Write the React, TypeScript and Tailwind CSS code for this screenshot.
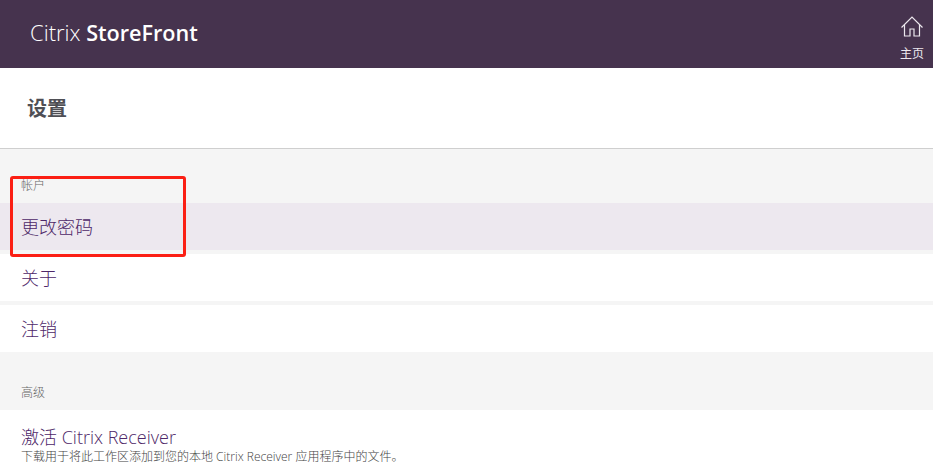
const App = () => {
  return (
    <div className="relative h-[464px] w-[933px] overflow-hidden bg-[#f5f5f5] font-['Open_Sans','Noto_Sans_CJK_SC',sans-serif]">
      {/* header */}
      <header className="flex h-[68px] items-center justify-between bg-[#46334e] pl-[30px] pr-[9px] text-white">
        <div className="mt-[-4px] text-[22px] leading-[30px]">
          <span className="font-light">Citrix</span> <span className="text-[21.6px] font-semibold">StoreFront</span>
        </div>
        <div className="flex flex-col items-center pt-[8px]">
          <svg width="24" height="24" viewBox="0 0 24 24" fill="none" stroke="#ece8ee" strokeWidth="1.2">
            <path d="M1.5 12.5 12 2l10.5 10.5" />
            <path d="M4.5 10v11h5.5v-7h4v7h5.5V10" />
          </svg>
          <span className="mt-[7px] text-[12px] leading-[16px] text-[#ece8ee]">主页</span>
        </div>
      </header>

      {/* page title */}
      <div className="flex h-[81px] items-center border-b border-[#cfcfcf] bg-white pl-[27px] pt-[1px]">
        <h1 className="text-[20px] font-bold text-[#4f4f55]">设置</h1>
      </div>

      {/* account */}
      <div className="h-[54px] pl-[21px] pt-[29px] text-[12px] font-light leading-[16px] text-[#666666]">帐户</div>
      <div className="flex flex-col gap-[4px] text-[18px] font-light text-[#4e2768]">
        <div className="flex h-[47px] items-center bg-[#ede8ef] pl-[21px] pt-[2px]">更改密码</div>
        <div className="flex h-[47px] items-center bg-white pl-[21px] pt-[2px]">关于</div>
        <div className="flex h-[47px] items-center bg-white pl-[21px] pt-[2px]">注销</div>
      </div>

      {/* advanced */}
      <div className="h-[58px] pl-[21px] pt-[33px] text-[12px] font-light leading-[16px] text-[#666666]">高级</div>
      <div className="h-[54px] bg-white pl-[21px] pt-[15px] font-light">
        <div className="text-[18px] leading-[24px] text-[#4e2768]">激活 Citrix Receiver</div>
        <div className="mt-[1px] text-[12px] leading-[14px] text-[#444444]">
          下载用于将此工作区添加到您的本地 Citrix Receiver 应用程序中的文件。
        </div>
      </div>

      {/* annotation box */}
      <div className="absolute left-[10px] top-[176px] h-[81px] w-[176px] rounded-[3px] border-[3px] border-[#fb1f14]" />
    </div>
  );
};

export default App;
